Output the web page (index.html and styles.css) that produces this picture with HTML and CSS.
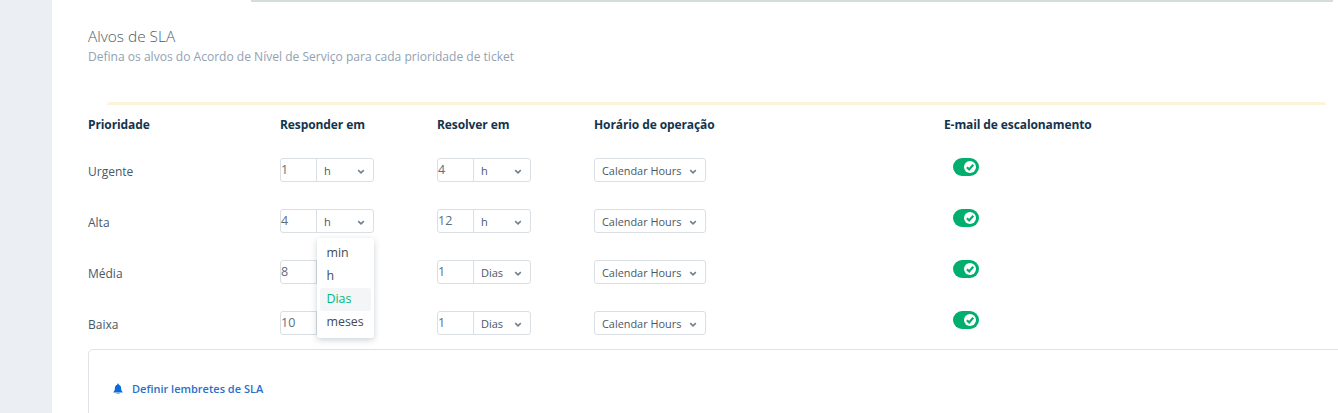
FILE: index.html
```html
<!DOCTYPE html>
<html lang="pt">
<head>
<meta charset="utf-8">
<title>Alvos de SLA</title>
<link rel="stylesheet" href="styles.css">
</head>
<body>
<div class="page">
  <aside class="side"></aside>
  <main class="main">
    <div class="topline"></div>
    <header class="head">
      <h1 class="title">Alvos de SLA</h1>
      <p class="sub">Defina os alvos do Acordo de Nível de Serviço para cada prioridade de ticket</p>
    </header>
    <div class="notice"></div>
    <div class="table">
      <div class="th">Prioridade</div><div class="th">Responder em</div><div class="th">Resolver em</div><div class="th">Horário de operação</div><div class="th">E-mail de escalonamento</div>

      <div class="label">Urgente</div>
      <div class="group"><span class="num">1</span><span class="unit">h<svg class="chev" viewBox="0 0 10 6"><path d="M1.5 1.2 5 4.6l3.5-3.4"/></svg></span></div>
      <div class="group"><span class="num">4</span><span class="unit">h<svg class="chev" viewBox="0 0 10 6"><path d="M1.5 1.2 5 4.6l3.5-3.4"/></svg></span></div>
      <div class="sel">Calendar Hours<svg class="chev" viewBox="0 0 10 6"><path d="M1.5 1.2 5 4.6l3.5-3.4"/></svg></div>
      <div class="tcell"><span class="toggle"><span class="knob"><svg viewBox="0 0 10 10"><path d="M2.4 5.2 4.3 7l3.4-3.8"/></svg></span></span></div>

      <div class="label">Alta</div>
      <div class="group anchor"><span class="num">4</span><span class="unit">h<svg class="chev" viewBox="0 0 10 6"><path d="M1.5 1.2 5 4.6l3.5-3.4"/></svg></span>
        <ul class="menu">
          <li>min</li><li>h</li><li class="on">Dias</li><li>meses</li>
        </ul>
      </div>
      <div class="group"><span class="num">12</span><span class="unit">h<svg class="chev" viewBox="0 0 10 6"><path d="M1.5 1.2 5 4.6l3.5-3.4"/></svg></span></div>
      <div class="sel">Calendar Hours<svg class="chev" viewBox="0 0 10 6"><path d="M1.5 1.2 5 4.6l3.5-3.4"/></svg></div>
      <div class="tcell"><span class="toggle"><span class="knob"><svg viewBox="0 0 10 10"><path d="M2.4 5.2 4.3 7l3.4-3.8"/></svg></span></span></div>

      <div class="label">Média</div>
      <div class="group"><span class="num">8</span><span class="unit unit-hidden">Dias<svg class="chev" viewBox="0 0 10 6"><path d="M1.5 1.2 5 4.6l3.5-3.4"/></svg></span></div>
      <div class="group"><span class="num">1</span><span class="unit">Dias<svg class="chev" viewBox="0 0 10 6"><path d="M1.5 1.2 5 4.6l3.5-3.4"/></svg></span></div>
      <div class="sel">Calendar Hours<svg class="chev" viewBox="0 0 10 6"><path d="M1.5 1.2 5 4.6l3.5-3.4"/></svg></div>
      <div class="tcell"><span class="toggle"><span class="knob"><svg viewBox="0 0 10 10"><path d="M2.4 5.2 4.3 7l3.4-3.8"/></svg></span></span></div>

      <div class="label">Baixa</div>
      <div class="group"><span class="num">10</span><span class="unit unit-hidden">Dias<svg class="chev" viewBox="0 0 10 6"><path d="M1.5 1.2 5 4.6l3.5-3.4"/></svg></span></div>
      <div class="group"><span class="num">1</span><span class="unit">Dias<svg class="chev" viewBox="0 0 10 6"><path d="M1.5 1.2 5 4.6l3.5-3.4"/></svg></span></div>
      <div class="sel">Calendar Hours<svg class="chev" viewBox="0 0 10 6"><path d="M1.5 1.2 5 4.6l3.5-3.4"/></svg></div>
      <div class="tcell"><span class="toggle"><span class="knob"><svg viewBox="0 0 10 10"><path d="M2.4 5.2 4.3 7l3.4-3.8"/></svg></span></span></div>
    </div>
    <section class="card">
      <a class="remind"><svg class="bell" viewBox="0 0 12 12"><path d="M6 .4c.5 0 .8.3.8.8v.5c1.500.4 2.300 1.700 2.300 3.300 0 2 .5 3 1.500 4 .2.200.1.600-.3.600H1.700c-.4 0-.5-.4-.3-.6 1-1 1.500-2 1.500-4 0-1.600.8-2.900 2.300-3.300v-.5c0-.5.3-.8.800-.8zM4.300 10.300h3.400v.5H4.300z"/></svg>Definir lembretes de SLA</a>
    </section>
  </main>
</div>
</body>
</html>
```
FILE: styles.css
```css
* { box-sizing: border-box; }
html, body { margin: 0; height: 100%; overflow: hidden; background: #fff; }
body { font-family: "Open Sans", "Liberation Sans", sans-serif; color: #475867; }
.page { display: flex; width: 1338px; height: 413px; overflow: hidden; }
.side { width: 52px; flex: none; background: #ebeff3; }
.main { flex: 1; min-width: 0; padding-left: 36px; }
.topline { height: 2px; margin-left: 163px; margin-right: 5px; background: #d3dedb; }
.head { padding-top: 25px; height: 100px; }
.title { margin: 0; font-size: 15.4px; line-height: 20px; font-weight: 300; color: #4a5a68; }
.sub { margin: 2px 0 0; font-size: 12.05px; line-height: 16px; font-weight: 400; color: #92a2b1; }
.notice { height: 3px; margin-left: 19px; margin-right: 12px; background: #fdf3d9; border-radius: 3px 3px 0 0; }
.table { display: grid; grid-template-columns: 192px 157px 157px 350px 300px; height: 245px; grid-template-rows: 41px 51px 51px 51px 51px; }
.th { font-size: 12px; font-weight: 700; color: #12344d; padding-top: 12px; line-height: 16px; letter-spacing: -.1px; }
.label { font-size: 12px; color: #475867; padding-top: 18px; line-height: 16px; }
.group { position: relative; display: flex; width: 94px; height: 24px; margin-top: 12px; border: 1px solid #dadfe3; border-radius: 3px; background: #fff; }
.num { width: 36px; flex: none; border-right: 1px solid #dadfe3; font-size: 12.5px; line-height: 22px; color: #5f6e7b; }
.unit { flex: 1; display: flex; align-items: center; justify-content: space-between; padding: 0 8px 0 7px; font-size: 11px; color: #475867; }
.unit-hidden { visibility: hidden; }
.chev { width: 8px; height: 5px; flex: none; margin-top: 2px; fill: none; stroke: #70808e; stroke-width: 2; }
.sel { display: flex; align-items: center; justify-content: space-between; width: 112px; height: 24px; margin-top: 12px; padding: 0 8px 0 7px; border: 1px solid #dadfe3; border-radius: 3px; font-size: 10.9px; color: #475867; }
.tcell { padding: 12px 0 0 9px; }
.toggle { display: flex; justify-content: flex-end; align-items: center; width: 26px; height: 18px; padding-right: 3px; border-radius: 9px; background: #00af6e; }
.knob { display: block; width: 12px; height: 12px; border-radius: 50%; background: #fff; }
.knob svg { display: block; width: 12px; height: 12px; fill: none; stroke: #00af6e; stroke-width: 1.8; }
.menu { position: absolute; z-index: 2; top: 23px; left: 35.5px; width: 57.5px; height: 100px; margin: 5px 0 0; padding: 4px 3px; list-style: none; background: #fff; border-radius: 3px; box-shadow: 0 2px 6px rgba(18, 52, 77, .22); }
.menu li { height: 23px; padding-left: 7px; font-size: 12.4px; line-height: 21px; color: #3f4b56; border-radius: 3px; }
.menu li.on { color: #00b97c; background: #f3f5f7; }
.card { margin-top: -1px; height: 80px; width: 1260px; padding: 31px 0 0 24px; border: 1px solid #dfe3e7; border-radius: 5px; }
.remind { display: flex; align-items: center; gap: 8px; font-size: 11px; font-weight: 600; line-height: 16px; color: #2a6fc9; }
.remind .bell { margin-left: -1px; }
.bell { width: 12px; height: 12px; fill: #0a6bd6; }
```
